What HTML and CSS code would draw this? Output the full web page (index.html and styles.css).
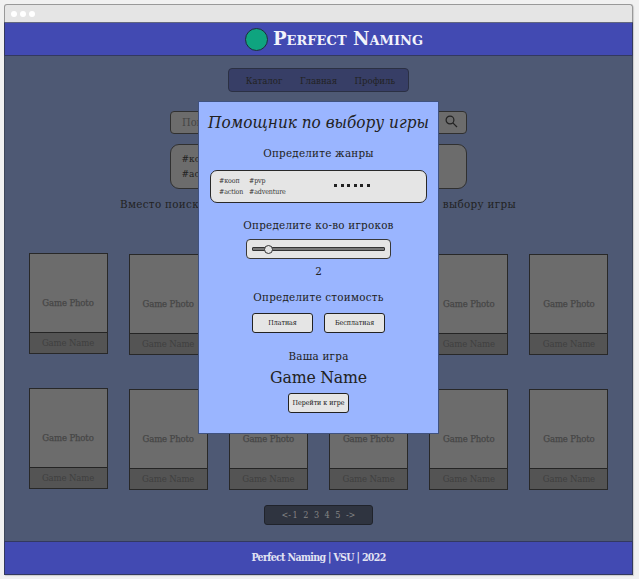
FILE: index.html
```html
<!DOCTYPE html>
<html lang="ru">
<head>
<meta charset="utf-8">
<title>Perfect Naming</title>
<link rel="stylesheet" href="styles.css">
</head>
<body>
<div class="window">
  <div class="titlebar"><i></i><i></i><i></i></div>
  <header class="header"><span class="logo"></span><h1>Perfect Naming</h1></header>
  <main class="main">
    <nav class="nav"><span>Каталог</span><span>Главная</span><span>Профиль</span></nav>
    <div class="search"><span>Поиск</span>
      <svg width="13" height="13" viewBox="0 0 13 13" fill="none" stroke="#222" stroke-width="1.2"><circle cx="5" cy="5" r="3.9"/><path d="M7.8 7.8L12 12"/></svg>
    </div>
    <div class="tags"><span>#кооп</span><span>#action</span></div>
    <p class="hint"><span>Вместо поиска</span><span>выбору игры</span></p>
    <section class="games">
      <article class="card raised"><div class="photo">Game Photo</div><div class="name">Game Name</div></article>
      <article class="card"><div class="photo">Game Photo</div><div class="name">Game Name</div></article>
      <article class="card"><div class="photo">Game Photo</div><div class="name">Game Name</div></article>
      <article class="card"><div class="photo">Game Photo</div><div class="name">Game Name</div></article>
      <article class="card"><div class="photo">Game Photo</div><div class="name">Game Name</div></article>
      <article class="card"><div class="photo">Game Photo</div><div class="name">Game Name</div></article>
      <article class="card raised"><div class="photo">Game Photo</div><div class="name">Game Name</div></article>
      <article class="card"><div class="photo">Game Photo</div><div class="name">Game Name</div></article>
      <article class="card"><div class="photo">Game Photo</div><div class="name">Game Name</div></article>
      <article class="card"><div class="photo">Game Photo</div><div class="name">Game Name</div></article>
      <article class="card"><div class="photo">Game Photo</div><div class="name">Game Name</div></article>
      <article class="card"><div class="photo">Game Photo</div><div class="name">Game Name</div></article>
    </section>
    <div class="pages"><span>&lt;-</span><span>1</span><span>2</span><span>3</span><span>4</span><span>5</span><span>-&gt;</span></div>
  </main>
  <footer class="footer">Perfect Naming | VSU | 2022</footer>
</div>
<div class="modal">
  <h2>Помощник по выбору игры</h2>
  <h3 class="genres-title">Определите жанры</h3>
  <div class="genres">
    <div class="genre-list"><span>#кооп</span><span>#pvp</span><span>#action</span><span>#adventure</span></div>
    <div class="dots"><i></i><i></i><i></i><i></i><i></i><i></i></div>
  </div>
  <h3 class="players-title">Определите ко-во игроков</h3>
  <div class="slider"><div class="track"><span class="knob"></span></div></div>
  <div class="count">2</div>
  <h3 class="price-title">Определите стоимость</h3>
  <div class="buttons"><button>Платная</button><button>Бесплатная</button></div>
  <h3 class="result-title">Ваша игра</h3>
  <div class="result">Game Name</div>
  <button class="go">Перейти к игре</button>
</div>
</body>
</html>
```
FILE: styles.css
```css
* { box-sizing: border-box; }
body {
  margin: 0;
  padding: 4px 0 0 4px;
  height: 579px;
  overflow: hidden;
  background: #f1f1f1;
  font-family: "Roboto Slab", "DejaVu Serif Condensed", "DejaVu Serif", serif;
  font-stretch: condensed;
  color: #222;
  white-space: nowrap;
}
h1, h2, h3, p { margin: 0; font-weight: 400; }
.window { width: 629px; height: 571px; display: flex; flex-direction: column; box-shadow: 1px 1px 1px #ccc; border-radius: 3px 3px 0 0; }
.titlebar {
  height: 18px;
  display: flex;
  align-items: center;
  gap: 3.3px;
  padding-left: 5.5px;
  background: #e5e5e5;
  border: 1px solid #999;
  border-bottom: 0;
  border-radius: 3px 3px 0 0;
}
.titlebar i { width: 6px; height: 6px; border-radius: 50%; background: #fff; }
.header {
  height: 34px;
  display: flex;
  align-items: center;
  padding-left: 240px;
  gap: 6px;
  background: #424ab2;
  border: 1px solid #33395f;
  border-top-color: #62677f;
  color: #f2f3fb;
}
.logo { width: 23px; height: 23px; border-radius: 50%; background: #0fa47f; border: 1px solid #202c3c; }
h1 { margin-left: -1px; font-family: "DejaVu Serif", serif; font-stretch: normal; font-size: 18px; font-weight: 700; font-variant: small-caps; letter-spacing: 0.03px; line-height: 24px; }
.main {
  height: 485px;
  display: flex;
  flex-direction: column;
  align-items: center;
  background: #4e5974;
  border: solid #3d465a;
  border-width: 0 1px;
}
.nav {
  width: 181px;
  height: 24px;
  margin: 12px 0 0 -1px;
  padding-left: 5px;
  border: 1px solid #2b3043;
  border-radius: 4px;
  background: #373e66;
  display: flex;
  align-items: center;
  justify-content: center;
  gap: 17.5px;
  font-size: 9.5px;
}
.search {
  width: 297px;
  height: 23px;
  margin-top: 19px;
  padding: 0 8px 0 11px;
  display: flex;
  align-items: center;
  justify-content: space-between;
  border: 1px solid #303030;
  border-radius: 4px;
  background: #6c6c6c;
  font-size: 11px;
  color: #444;
}
.search svg { margin-top: -3px; }
.tags {
  width: 297px;
  height: 45px;
  margin: 10px 1px 0 0;
  padding: 6px 11px;
  display: flex;
  flex-direction: column;
  border: 1px solid #303030;
  border-radius: 9px;
  background: #6c6c6c;
  font-size: 10px;
  line-height: 15px;
}
.hint { width: 396px; height: 18px; margin: 6px 1px 0 0; display: flex; justify-content: space-between; font-size: 11.5px; line-height: 18px; letter-spacing: 0.32px; }
.games {
  width: 580px;
  margin-top: 41px;
  display: grid;
  grid-template-columns: repeat(6, 79px);
  justify-content: space-between;
  row-gap: 34px;
}
.card { height: 101px; border: 1px solid #282828; background: #6c6c6c; text-align: center; font-size: 9.5px; letter-spacing: -0.15px; display: flex; flex-direction: column; }
.raised { margin-top: -1px; margin-bottom: 1px; }
.photo { height: 78px; padding-top: 42px; line-height: 14px; color: #464646; -webkit-text-stroke: 0.25px #464646; }
.name { flex: 1; border-top: 1px solid #242424; background: #545454; line-height: 19px; color: #404040; }
.pages {
  width: 109px;
  height: 20px;
  margin-top: 15px;
  border: 1px solid #20232b;
  border-radius: 3px;
  background: #2f3440;
  color: #858585;
  display: flex;
  align-items: center;
  justify-content: center;
  gap: 5.5px;
  font-size: 9px;
}
.pages span:first-child { margin-right: -4px; }
.footer {
  flex: 1;
  border: 1px solid #33395f;
  background: #424ab2;
  color: #e2e3f3;
  text-align: center;
  font-size: 10.5px;
  font-weight: 700;
  line-height: 31px;
  letter-spacing: -0.65px;
}
.modal {
  position: absolute;
  left: 198px;
  top: 101px;
  width: 241px;
  height: 333px;
  border: 1px solid #40527f;
  background: #9ab5ff;
  display: flex;
  flex-direction: column;
  align-items: center;
}
h2 { margin-top: 8px; font-size: 17px; font-style: italic; line-height: 24px; }
h3 { font-size: 11.5px; line-height: 16px; letter-spacing: 0.25px; }
.genres-title { margin-top: 11px; }
.genres {
  width: 217px;
  height: 33px;
  margin-top: 9px;
  padding: 4px 8px;
  display: flex;
  justify-content: space-between;
  align-items: center;
  border: 1px solid #292929;
  border-radius: 7px;
  background: #e5e5e5;
}
.genre-list { display: grid; grid-template-columns: 30px auto; font-size: 7px; line-height: 11px; letter-spacing: -0.1px; color: #333; }
.dots { display: flex; gap: 3.6px; margin-right: 48px; margin-top: -2px; }
.dots i { width: 3px; height: 3px; background: #222; }
.players-title { margin-top: 14px; }
.slider { width: 145px; height: 20px; margin-top: 6px; padding: 0 5px; display: flex; align-items: center; border: 1px solid #383838; border-radius: 4px; background: #e5e5e5; }
.track { width: 133px; height: 4px; display: flex; align-items: center; padding-left: 11px; background: #777; border: 1px solid #333; border-radius: 1px; }
.knob { width: 9px; height: 9px; border-radius: 50%; border: 1px solid #333; background: #e5e5e5; flex: none; }
.count { margin-top: 4px; font-size: 11.5px; line-height: 16px; }
.price-title { margin-top: 10px; }
.buttons { display: flex; gap: 11px; margin-top: 8px; }
button { width: 61px; height: 20px; padding: 0; border: 1px solid #222; border-radius: 3px; background: #e5e5e5; color: #111; font: inherit; font-size: 7px; line-height: 18px; }
.result-title { margin-top: 15px; }
.result { font-size: 17.5px; line-height: 24px; margin-top: 1px; letter-spacing: -0.2px; }
.go { margin-top: 4px; }
```
